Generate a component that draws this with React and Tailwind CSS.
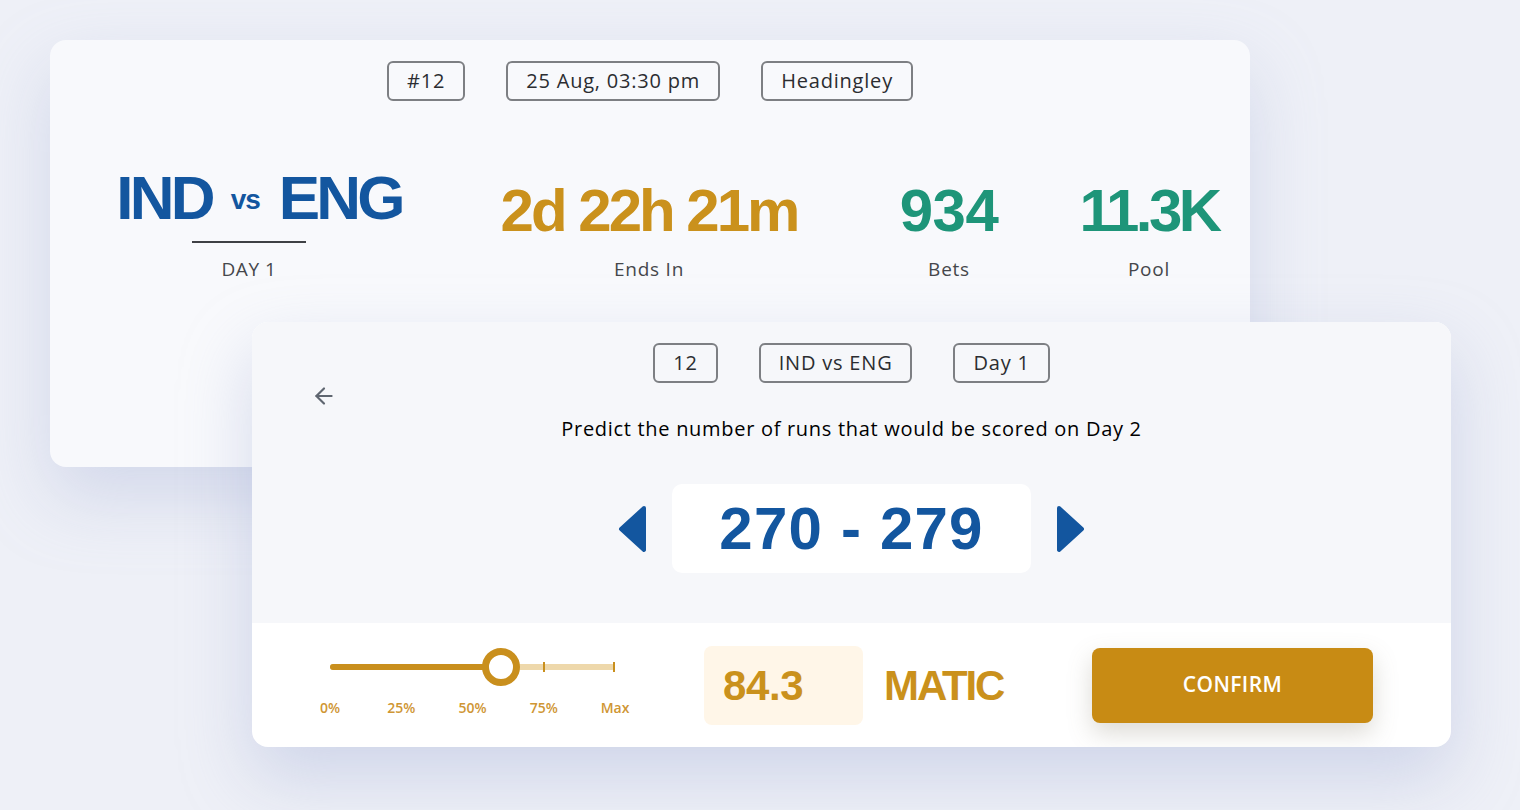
import React from "react";
import { ArrowLeft } from "lucide-react";

const body = { fontFamily: '"Open Sans", "Noto Sans", sans-serif' };
const display = { fontFamily: '"Liberation Sans", Arial, sans-serif' };

function Pill({ children }) {
  return (
    <span className="h-[40px] px-[18px] inline-flex items-center rounded-md border-2 border-[#7d7f83] text-[20px] tracking-[0.04em] text-[#2b2d31]">
      {children}
    </span>
  );
}

function Stat({ value, label, color, width, track }) {
  return (
    <div className={`${width} flex flex-col items-center`}>
      <p className={`mt-[14px] text-[60px] leading-[60px] font-bold ${track} ${color}`} style={display}>{value}</p>
      <p className="mt-[16px] text-[19px] leading-[24px] tracking-[0.04em] text-[#45474b]">{label}</p>
    </div>
  );
}

function Caret({ dir }) {
  const d = dir === "left" ? "M27 4 L4 25 L27 46 Z" : "M3 4 L26 25 L3 46 Z";
  return (
    <svg width="30" height="50" viewBox="0 0 30 50">
      <path d={d} fill="#13569f" stroke="#13569f" strokeWidth="4" strokeLinejoin="round" />
    </svg>
  );
}

function AmountSlider() {
  const marks = ["0%", "25%", "50%", "75%", "Max"];
  return (
    <div className="w-[285px] pt-[12px]">
      <div className="relative h-[6px] rounded-full bg-[#eed8ab]">
        <div className="absolute left-0 top-0 h-[6px] w-[171px] rounded-full bg-[#c98f1d]" />
        <span className="absolute left-[213px] top-[-2px] w-[2px] h-[10px] bg-[#c98f1d]" />
        <span className="absolute right-0 top-[-2px] w-[2px] h-[10px] bg-[#c98f1d]" />
        <span className="absolute left-[152px] top-[-16px] w-[38px] h-[38px] rounded-full border-[7px] border-[#c98f1d] bg-white" />
      </div>
      <div className="mt-[27px] -ml-[20px] w-[325px] flex justify-between">
        {marks.map((m) => (
          <span key={m} className="w-[40px] text-center text-[14px] font-semibold text-[#cf9634]">{m}</span>
        ))}
      </div>
    </div>
  );
}

export default function App() {
  return (
    <div className="w-[1520px] h-[810px] overflow-hidden bg-[#eef0f7] pt-[40px]" style={body}>
      {/* match summary */}
      <div className="ml-[50px] w-[1200px] h-[427px] rounded-2xl bg-[#f8f9fc] shadow-[0_30px_70px_rgba(160,172,212,0.35)]">
        <div className="pt-[21px] flex justify-center gap-[41px]">
          <Pill>#12</Pill>
          <Pill>25 Aug, 03:30 pm</Pill>
          <Pill>Headingley</Pill>
        </div>
        <div className="mt-[66px] ml-[49px] flex items-start">
          <div className="w-[300px] flex flex-col items-center">
            <div className="h-[62px] pl-[20px] flex items-center font-bold text-[#13569f]" style={display}>
              <span className="text-[62px] leading-none tracking-[-0.06em]">IND</span>
              <span className="text-[28px] leading-none mx-[19px] mt-[4px] tracking-[-0.04em]">vs</span>
              <span className="text-[62px] leading-none tracking-[-0.06em]">ENG</span>
            </div>
            <span className="mt-[12px] w-[114px] h-[2px] bg-[#3f4145]" />
            <p className="mt-[14px] text-[19px] leading-[24px] tracking-[0.03em] text-[#45474b]">DAY 1</p>
          </div>
          <div className="w-[50px]" />
          <Stat value="2d 22h 21m" label="Ends In" color="text-[#ca911c]" width="w-[400px]" track="tracking-[-0.05em]" />
          <Stat value="934" label="Bets" color="text-[#1e9579]" width="w-[200px]" track="tracking-[-0.01em]" />
          <Stat value="11.3K" label="Pool" color="text-[#1e9579]" width="w-[200px]" track="tracking-[-0.06em]" />
        </div>
      </div>

      {/* prediction card */}
      <div className="relative -mt-[145px] ml-[252px] w-[1199px] h-[425px] rounded-2xl overflow-hidden bg-white shadow-[0_30px_70px_rgba(160,172,212,0.4)]">
        <div className="bg-[#f6f7fa] pb-[50px]">
          <div className="pt-[21px] flex justify-center gap-[41px]">
            <Pill>12</Pill>
            <Pill>IND vs ENG</Pill>
            <Pill>Day 1</Pill>
          </div>
          <div className="h-[24px] pl-[59px] flex items-start">
            <ArrowLeft size={26} strokeWidth={2} className="text-[#5f6670]" />
          </div>
          <p className="mt-[10px] text-center text-[20px] leading-[24px] tracking-[0.035em] text-black">
            Predict the number of runs that would be scored on Day 2
          </p>
          <div className="mt-[43px] flex items-center justify-center gap-[25px]">
            <Caret dir="left" />
            <div className="w-[359px] h-[89px] rounded-[10px] bg-white flex items-center justify-center">
              <span className="text-[60px] font-bold text-[#13569f] tracking-[0.02em]" style={display}>270 - 279</span>
            </div>
            <Caret dir="right" />
          </div>
        </div>
        <div className="h-[124px] flex items-center pl-[78px] pr-[78px]">
          <AmountSlider />
          <div className="ml-[89px] w-[159px] h-[79px] rounded-lg bg-[#fff6e8] flex items-center pl-[19px]">
            <span className="text-[42px] font-bold text-[#ca911c] tracking-[-0.01em]" style={display}>84.3</span>
          </div>
          <span className="ml-[21px] text-[42px] font-bold text-[#ca911c] tracking-[-0.05em]" style={display}>MATIC</span>
          <button className="ml-auto w-[281px] h-[75px] rounded-lg bg-[#c88b14] text-white text-[21px] font-semibold tracking-[0.02em] shadow-[0_10px_24px_rgba(120,110,90,0.25)]">
            CONFIRM
          </button>
        </div>
      </div>
    </div>
  );
}
